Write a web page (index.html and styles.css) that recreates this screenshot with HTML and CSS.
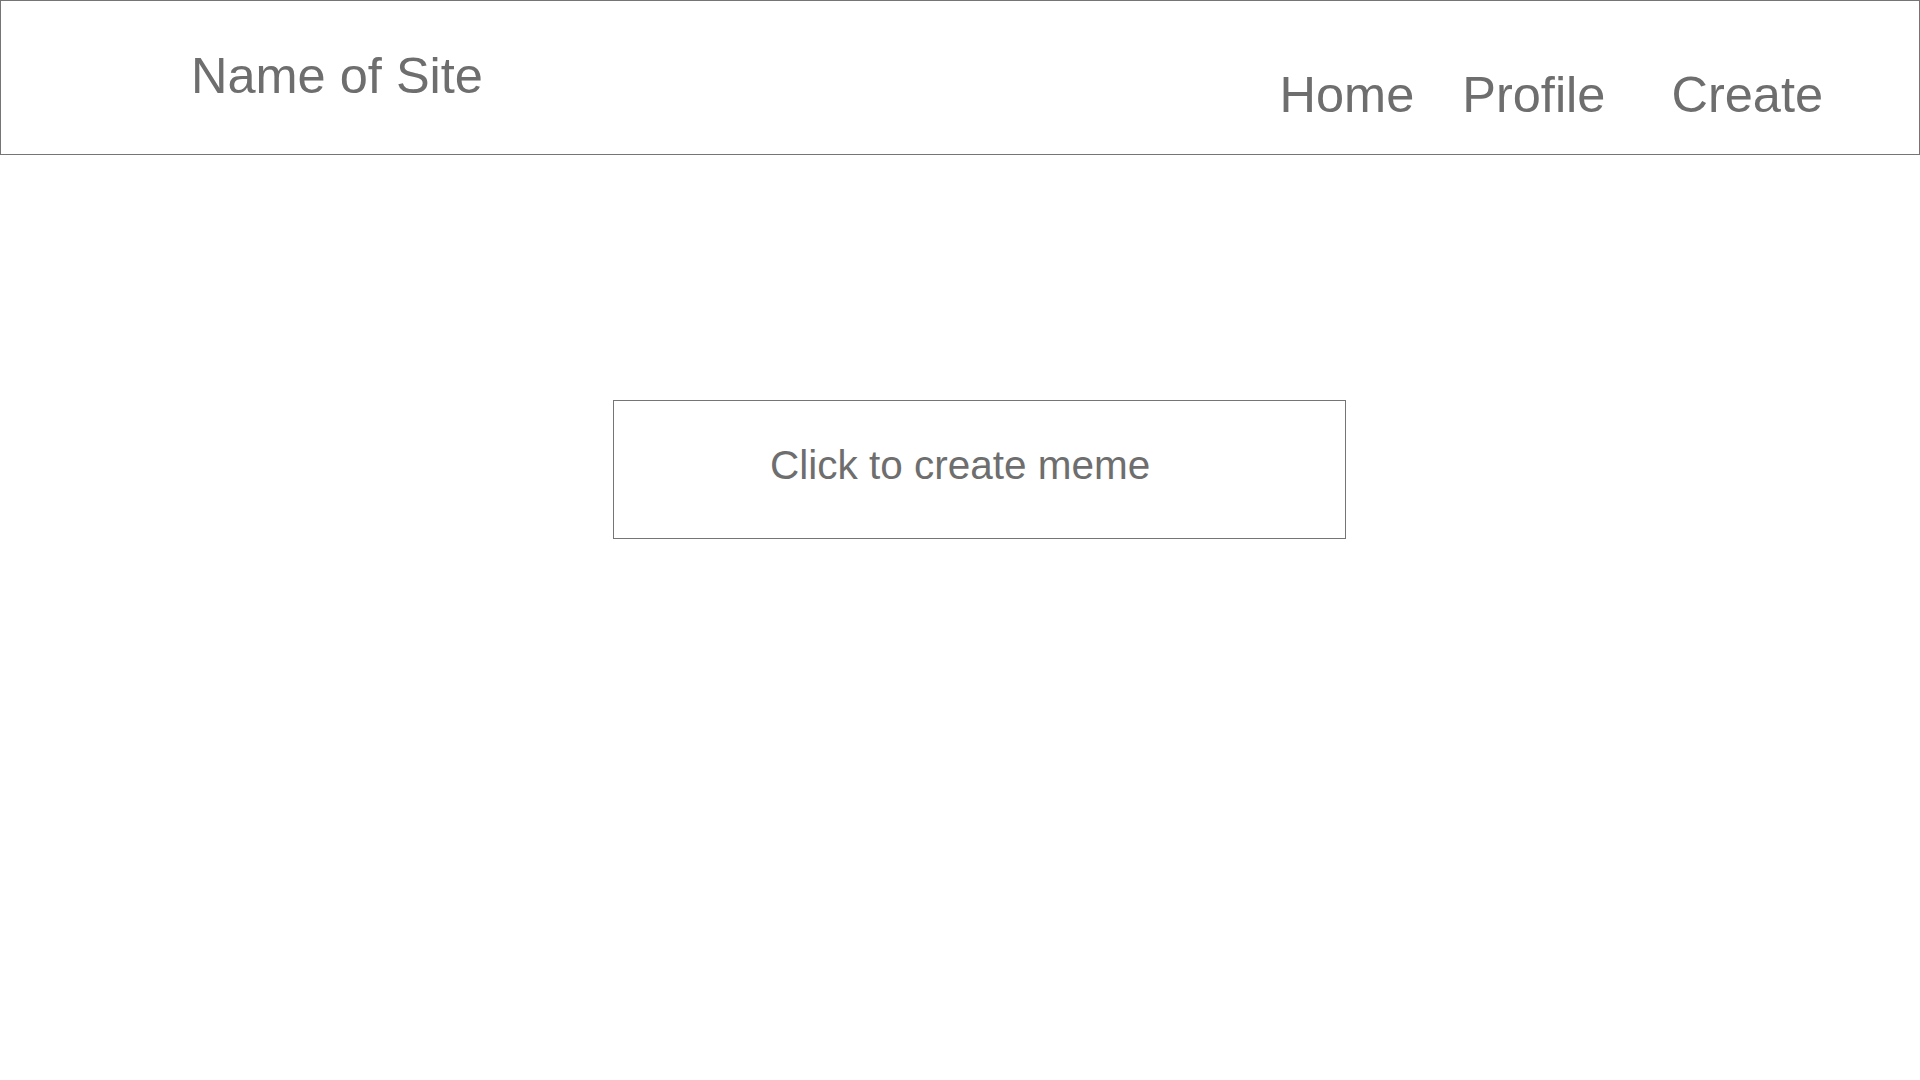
FILE: index.html
```html
<!DOCTYPE html>
<html lang="en">
<head>
<meta charset="utf-8">
<title>Name of Site</title>
<link rel="stylesheet" href="styles.css">
</head>
<body>
<header class="site-header">
  <div class="site-name">Name of Site</div>
  <nav class="site-nav">
    <a class="nav-link nav-home" href="#">Home</a>
    <a class="nav-link nav-profile" href="#">Profile</a>
    <a class="nav-link nav-create" href="#">Create</a>
  </nav>
</header>
<main class="content">
  <div class="create-box">Click to create meme</div>
</main>
</body>
</html>
```
FILE: styles.css
```css
* { box-sizing: border-box; }
html, body { margin: 0; padding: 0; background: #ffffff; }
body {
  font-family: "Liberation Sans", Arial, Helvetica, sans-serif;
  color: #6e6e6e;
  width: 1920px;
  height: 1080px;
  overflow: hidden;
}
.site-header {
  display: flex;
  align-items: flex-start;
  height: 155px;
  border: 1px solid #757575;
}
.site-name {
  font-size: 50.5px;
  line-height: 50px;
  margin-left: 190px;
  padding-top: 50px;
}
.site-nav {
  display: flex;
  margin-left: auto;
  margin-right: 96px;
  padding-top: 69px;
}
.nav-link {
  font-size: 50.5px;
  line-height: 50px;
  color: #6e6e6e;
  text-decoration: none;
}
.nav-profile { margin-left: 48px; }
.nav-create { margin-left: 66px; }
.content {
  display: flex;
  padding-top: 245px;
  padding-left: 613px;
}
.create-box {
  width: 733px;
  height: 139px;
  border: 1px solid #757575;
  font-size: 40.5px;
  line-height: 40px;
  padding-top: 44px;
  padding-left: 156px;
}
```
